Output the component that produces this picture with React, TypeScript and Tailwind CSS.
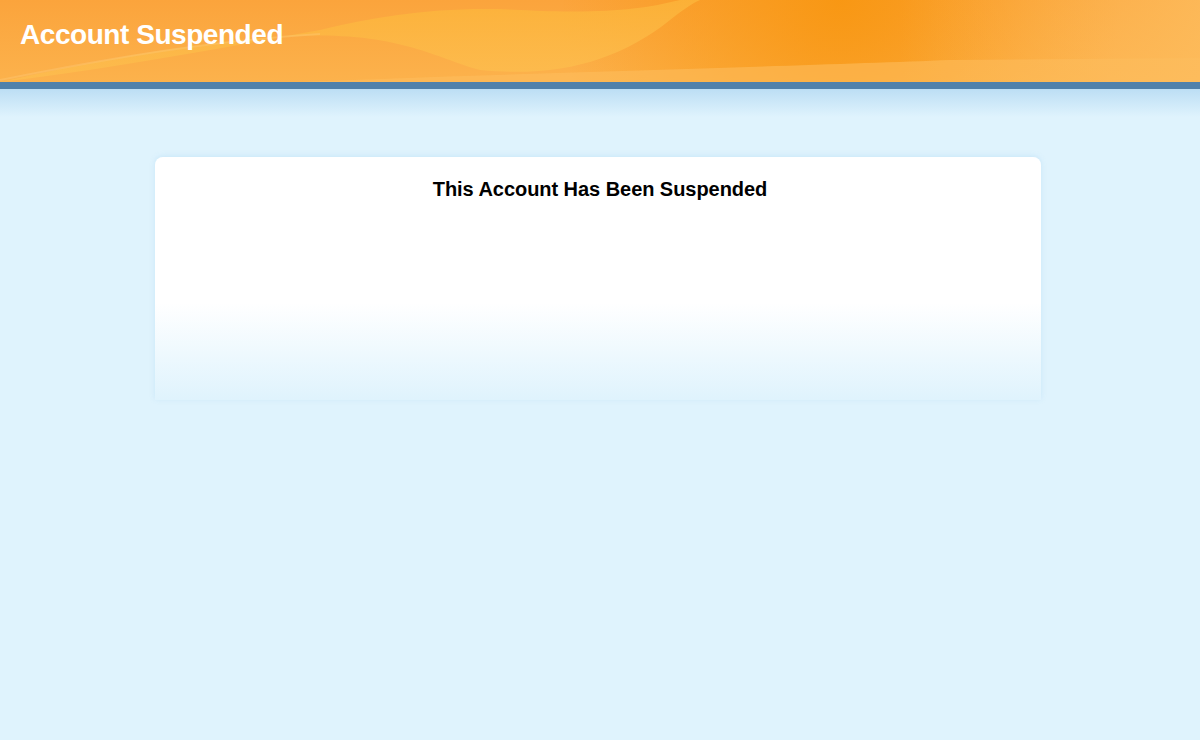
function HeaderWaves() {
  return (
    <svg className="absolute inset-0 h-full w-full" viewBox="0 0 1200 82" preserveAspectRatio="none">
      <defs>
        <linearGradient id="hbase" x1="0" y1="0" x2="0" y2="1">
          <stop offset="0" stopColor="#fba43c" />
          <stop offset="1" stopColor="#fcb24c" />
        </linearGradient>
        <radialGradient id="hdark" cx="840" cy="0" r="280" gradientUnits="userSpaceOnUse">
          <stop offset="0" stopColor="#f8960f" stopOpacity="0.9" />
          <stop offset="1" stopColor="#f8960f" stopOpacity="0" />
        </radialGradient>
        <linearGradient id="hlight" x1="0" y1="0" x2="0" y2="1">
          <stop offset="0" stopColor="#fcb53a" />
          <stop offset="1" stopColor="#fdbe50" />
        </linearGradient>
        <linearGradient id="hright" x1="0" y1="0" x2="1" y2="0">
          <stop offset="0" stopColor="#fdb957" stopOpacity="0" />
          <stop offset="1" stopColor="#fdbd5e" stopOpacity="0.8" />
        </linearGradient>
      </defs>
      <rect width="1200" height="82" fill="url(#hbase)" />
      <rect width="1200" height="82" fill="url(#hdark)" />
      <path d="M0 82 C 100 60, 200 40, 300 36 C 400 32, 440 60, 480 70 C 560 78, 620 60, 670 20 C 685 8, 695 2, 700 0 L 680 0 C 640 10, 600 14, 520 10 C 440 6, 380 16, 320 30 C 200 52, 100 70, 0 82 Z" fill="url(#hlight)" opacity="0.8" />
      <path d="M300 82 C 500 74, 800 66, 950 60 L 1200 58 L 1200 82 Z" fill="#fdbd5c" opacity="0.6" />
      <rect x="900" width="300" height="82" fill="url(#hright)" />
      <path d="M0 80 C 120 56, 220 40, 320 34" stroke="#fdc36b" strokeWidth="2" fill="none" opacity="0.5" />
    </svg>
  )
}

export default function App() {
  return (
    <div className="min-h-[740px] bg-[#dff3fd] font-['Liberation_Sans',Arial,sans-serif]">
      <header className="relative h-[82px] overflow-hidden">
        <HeaderWaves />
        <h1 className="relative pl-5 pt-[17px] text-[28px] font-bold leading-[36px] tracking-[-0.45px] text-white">
          Account Suspended
        </h1>
      </header>
      <div className="h-[7px] bg-[#5081ab]" />
      <div className="h-[28px] bg-gradient-to-b from-[#bcdef4] to-[#dff3fd]" />

      <div className="flex justify-center pt-[40px] pr-[4px]">
        <div className="h-[243px] w-[886px] rounded-t-[8px] bg-gradient-to-b from-white from-[60%] to-[#dff3fd] shadow-[0_-1px_5px_rgba(160,210,240,0.35)]">
          <h2 className="pt-[20px] pl-[4px] text-center text-[20px] font-bold leading-[24px] tracking-[-0.05px] text-black">
            This Account Has Been Suspended
          </h2>
        </div>
      </div>
    </div>
  )
}
